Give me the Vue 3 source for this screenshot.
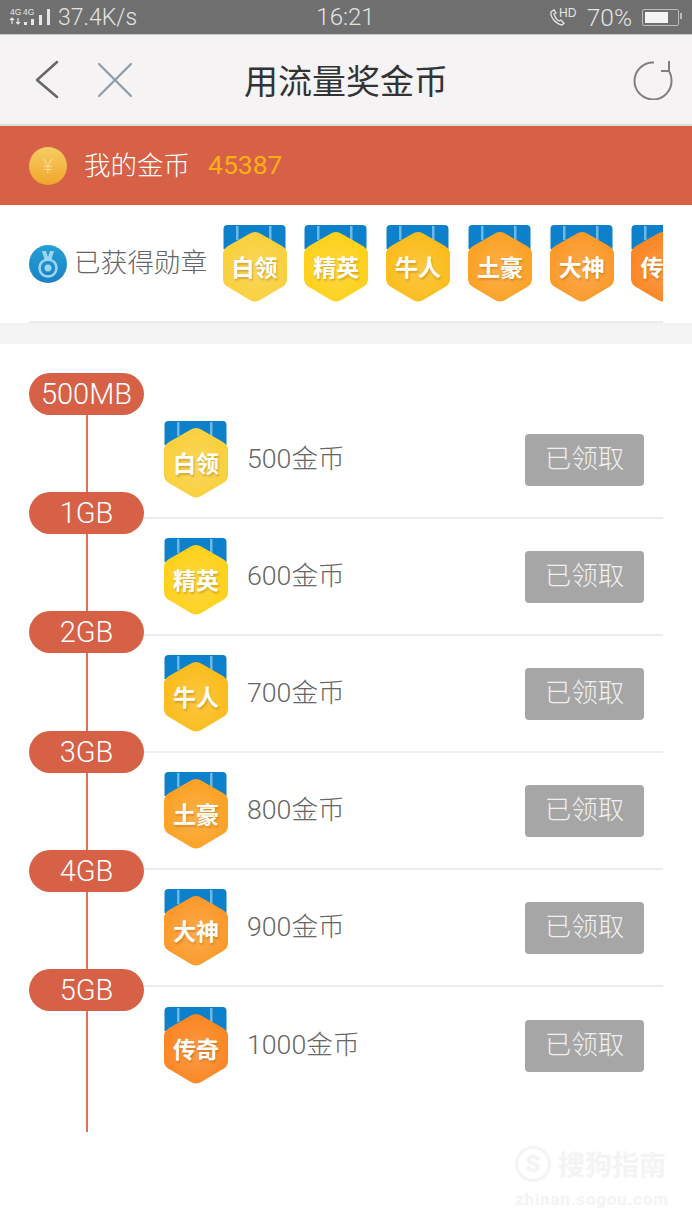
<template>
  <div class="page">
    <div class="status-bar">
      <div class="status-left">
        <svg class="signal" width="42" height="18" viewBox="0 0 42 18">
          <text x="1" y="7" font-size="8.500" fill="#e6e6e6" font-family="Liberation Sans, sans-serif">4G</text>
          <text x="14" y="7" font-size="8.500" fill="#e6e6e6" font-family="Liberation Sans, sans-serif">4G</text>
          <path d="M3 10v6M1 12l2-2 2 2M9 10v6M7 14l2 2 2-2" stroke="#e6e6e6" stroke-width="1.200" fill="none" />
          <rect x="15" y="14" width="3" height="3" fill="#e6e6e6" />
          <rect x="22" y="11" width="3" height="6" fill="#e6e6e6" />
          <rect x="30" y="7" width="3" height="10" fill="#e6e6e6" />
          <rect x="38" y="1" width="3" height="16" fill="#e6e6e6" />
        </svg>
        <span>37.4K/s</span>
      </div>
      <span class="clock">16:21</span>
      <div class="status-right">
        <svg width="30" height="20" viewBox="0 0 30 20">
          <path d="M3 5c-1 5 5 12 11 13l2-1.500-3-3.500-2 1c-2-1-4-4-5-7l2-1-2-3z" fill="none" stroke="#e6e6e6" stroke-width="1.300" />
          <text x="11" y="10" font-size="12" fill="#e6e6e6" font-family="Liberation Sans, sans-serif">HD</text>
        </svg>
        <span class="pct">70%</span>
        <div class="battery"><i></i></div>
      </div>
    </div>

    <div class="nav">
      <div class="nav-left">
        <svg width="24" height="40" viewBox="0 0 24 40">
          <path d="M22 2 2 20l20 17" fill="none" stroke="#666" stroke-width="2.500" stroke-linecap="round" stroke-linejoin="round" />
        </svg>
        <svg width="36" height="36" viewBox="0 0 36 36">
          <path d="M2 2l32 32M34 2 2 34" stroke="#8f9ca8" stroke-width="2.200" stroke-linecap="round" />
        </svg>
      </div>
      <h1 class="title">用流量奖金币</h1>
      <div class="nav-right">
        <svg width="42" height="40" viewBox="0 0 42 40">
          <path d="M23 2.500A18.500 18.500 0 1 0 40.500 20c0-3.500-1-6.500-2.500-9" fill="none" stroke="#808080" stroke-width="2" />
          <path d="M38 1v10H30" fill="none" stroke="#808080" stroke-width="2" />
        </svg>
      </div>
    </div>

    <div class="coins">
      <div class="coin">¥</div>
      <span class="coins-label">我的金币</span>
      <span class="coins-num">45387</span>
    </div>

    <div class="earned">
      <svg class="earned-icon" width="38" height="38" viewBox="0 0 38 38">
        <defs>
          <linearGradient id="bluecircle" x1="0" y1="0" x2="0" y2="1">
            <stop offset="0" stop-color="#24a0d6" />
            <stop offset="1" stop-color="#1a80c4" />
          </linearGradient>
          <radialGradient id="shine" cx="0.5" cy="0.55" r="0.5">
            <stop offset="0" stop-color="#fff" stop-opacity="0.16" />
            <stop offset="1" stop-color="#fff" stop-opacity="0" />
          </radialGradient>
        </defs>
        <circle cx="19" cy="19" r="19" fill="url(#bluecircle)" />
        <path d="M13 6h4l2 6 2-6h4l-3 10h-6z" fill="#9ed6f2" />
        <circle cx="19" cy="23" r="8.500" fill="none" stroke="#9ed6f2" stroke-width="2.500" />
        <circle cx="19" cy="23" r="3.500" fill="#9ed6f2" />
      </svg>
      <span class="earned-text">已获得勋章</span>
      <div class="medals">
        <div v-for="m in medals" :key="m.name" class="medal">
          <svg class="medal-bg" width="64" height="77" viewBox="0 0 64 77">
            <path d="M0.500 4a4 4 0 0 1 4-4h54a4 4 0 0 1 4 4v20h-62z" fill="#0c80cb" />
            <rect x="13" y="1" width="2.500" height="14" fill="#6cb9e8" />
            <rect x="46" y="1" width="2.500" height="14" fill="#6cb9e8" />
            <path :d="hex" :fill="m.color" />
            <path :d="hex" fill="url(#shine)" />
          </svg>
          <span>{{ m.name }}</span>
        </div>
      </div>
    </div>
    <div class="gap"></div>

    <div class="list">
      <div class="timeline">
        <div v-for="s in steps" :key="s" class="pill">{{ s }}</div>
      </div>
      <div class="rows">
        <div v-for="m in medals" :key="m.name" class="row">
          <div class="medal">
            <svg class="medal-bg" width="64" height="77" viewBox="0 0 64 77">
              <path d="M0.500 4a4 4 0 0 1 4-4h54a4 4 0 0 1 4 4v20h-62z" fill="#0c80cb" />
              <rect x="13" y="1" width="2.500" height="14" fill="#6cb9e8" />
              <rect x="46" y="1" width="2.500" height="14" fill="#6cb9e8" />
              <path :d="hex" :fill="m.color" />
              <path :d="hex" fill="url(#shine)" />
            </svg>
            <span>{{ m.name }}</span>
          </div>
          <span class="reward">{{ m.coins }}金币</span>
          <button class="claimed">已领取</button>
        </div>
      </div>
    </div>

    <div class="watermark">
      <div class="wm-top"><b class="wm-logo">S</b><span>搜狗指南</span></div>
      <div class="wm-url">zhinan.sogou.com</div>
    </div>
  </div>
</template>

<script setup>
// rounded hexagon of the medal
const hex =
  "M26 9Q32 5 38 9L59 21Q64 24 64 29V54Q64 59 59 62L38 74.500Q32 78.500 26 74.500L5 62Q0 59 0 54V29Q0 24 5 21Z";

const medals = [
  { name: "白领", coins: 500, color: "#f9d03e" },
  { name: "精英", coins: 600, color: "#fdd11c" },
  { name: "牛人", coins: 700, color: "#fbbd1e" },
  { name: "土豪", coins: 800, color: "#fba227" },
  { name: "大神", coins: 900, color: "#fb9a2b" },
  { name: "传奇", coins: 1000, color: "#fb8725" },
];

const steps = ["500MB", "1GB", "2GB", "3GB", "4GB", "5GB"];
</script>

<style>
html,
body {
  background: #fff;
}
</style>

<style scoped>
.page {
  position: relative;
  width: 692px;
  height: 1230px;
  overflow: hidden;
  background: #fff;
  font-family: "Roboto", "Noto Sans CJK SC", sans-serif;
  font-weight: 300;
}

.status-bar {
  display: grid;
  grid-template-columns: 1fr auto 1fr;
  align-items: center;
  height: 34px;
  padding: 0 10px 0 9px;
  background: #6f6f6f;
  color: #e4e4e4;
  font-size: 23px;
  border-bottom: 1px solid #c8c8c8;
}
.status-left {
  display: flex;
  align-items: center;
  gap: 7px;
}
.clock {
  font-size: 24px;
}
.status-right {
  display: flex;
  align-items: center;
  justify-content: flex-end;
}
.pct {
  margin: 0 10px 0 9px;
  font-size: 24.500px;
}
.battery {
  position: relative;
  width: 31px;
  height: 11px;
  border: 1px solid #bbb;
  border-radius: 2px;
  margin-right: 3px;
  padding: 2px;
}
.battery i {
  display: block;
  width: 23px;
  height: 100%;
  background: #f4f4f4;
}
.battery::after {
  content: "";
  position: absolute;
  right: -4px;
  top: 3px;
  width: 2px;
  height: 6px;
  background: #bbb;
}

.nav {
  display: grid;
  grid-template-columns: 1fr auto 1fr;
  align-items: center;
  height: 89px;
  padding: 0 19px;
  background: #f5f3f4;
  border-bottom: 2px solid #dedede;
}
.nav-left {
  display: flex;
  align-items: center;
  gap: 38px;
  padding-left: 16px;
}
.nav-right {
  display: flex;
  justify-content: flex-end;
}
.title {
  margin: 0;
  font-size: 34px;
  font-weight: 400;
  color: #333;
}

.coins {
  display: flex;
  align-items: center;
  height: 79px;
  padding-left: 29px;
  background: #d66147;
}
.coin {
  width: 38px;
  height: 38px;
  border-radius: 50%;
  background: linear-gradient(#f6cc62, #f0a62e);
  color: #fbd98a;
  font-size: 20px;
  line-height: 38px;
  text-align: center;
}
.coins-label {
  margin-left: 17px;
  padding-bottom: 4px;
  color: #fff;
  font-size: 26.500px;
}
.coins-num {
  margin-left: 18px;
  padding-bottom: 2px;
  color: #ffae14;
  font-size: 26.500px;
  font-weight: 400;
}

.earned {
  display: flex;
  align-items: center;
  height: 115px;
  margin: 1px 29px 0;
  border-bottom: 2px solid #ececec;
}
.earned-icon {
  flex-shrink: 0;
}
.earned-text {
  margin-left: 7px;
  padding-bottom: 7px;
  flex-shrink: 0;
  font-size: 26.500px;
  letter-spacing: 0.200px;
  color: #666;
}
.medals {
  display: flex;
  gap: 17.800px;
  margin-left: 15px;
  overflow: hidden;
}
.medal {
  position: relative;
  flex-shrink: 0;
  display: flex;
  align-items: center;
  justify-content: center;
  width: 64px;
  height: 77px;
  padding-top: 5px;
  box-sizing: border-box;
}
.medal-bg {
  position: absolute;
  left: 0;
  top: 0;
}
.medal span {
  position: relative;
  color: #fff;
  font-size: 23px;
  font-weight: 700;
  white-space: nowrap;
  text-shadow: 1px 2px 2px rgba(150, 90, 0, 0.35);
}

.gap {
  height: 21px;
  background: #f3f3f3;
}

.list {
  display: flex;
}
.timeline {
  position: relative;
  display: flex;
  flex-direction: column;
  flex-shrink: 0;
  gap: 77.200px;
  width: 115px;
  height: 759px;
  margin: 29px 0 0 29px;
}
.timeline::before {
  content: "";
  position: absolute;
  left: 57px;
  top: 0;
  bottom: 0;
  width: 2px;
  background: #e2705a;
}
.pill {
  position: relative;
  height: 42px;
  line-height: 42px;
  border-radius: 21px;
  background: #d66147;
  color: #fff;
  font-size: 29px;
  text-align: center;
}
.rows {
  width: 519px;
  padding-top: 58px;
}
.row {
  display: flex;
  align-items: center;
  box-sizing: border-box;
  height: 117px;
  padding: 0 19px 0 20px;
  border-bottom: 2px solid #ececec;
}
.row:last-child {
  border-bottom: none;
}
.reward {
  margin-left: 19px;
  padding-bottom: 6px;
  font-size: 26.700px;
  color: #666;
}
.claimed {
  margin-left: auto;
  width: 119px;
  height: 52px;
  padding: 0 0 6px;
  border: none;
  border-radius: 4px;
  background: #a6a6a6;
  color: #f0f0f0;
  font-family: inherit;
  font-weight: 300;
  font-size: 26.500px;
}

.watermark {
  position: absolute;
  left: 515px;
  top: 1144px;
  color: #f4f4f4;
  text-shadow: 0 0 2px #fafafa;
}
.wm-top {
  display: flex;
  align-items: center;
  gap: 7px;
  font-size: 27px;
  font-weight: 700;
  white-space: nowrap;
}
.wm-logo {
  width: 30px;
  height: 30px;
  border: 3px solid #f4f4f4;
  border-radius: 50%;
  line-height: 30px;
  text-align: center;
  font-size: 24px;
}
.wm-url {
  margin-top: 6px;
  font-size: 17px;
  font-weight: 700;
  letter-spacing: 0.800px;
  white-space: nowrap;
}
</style>
